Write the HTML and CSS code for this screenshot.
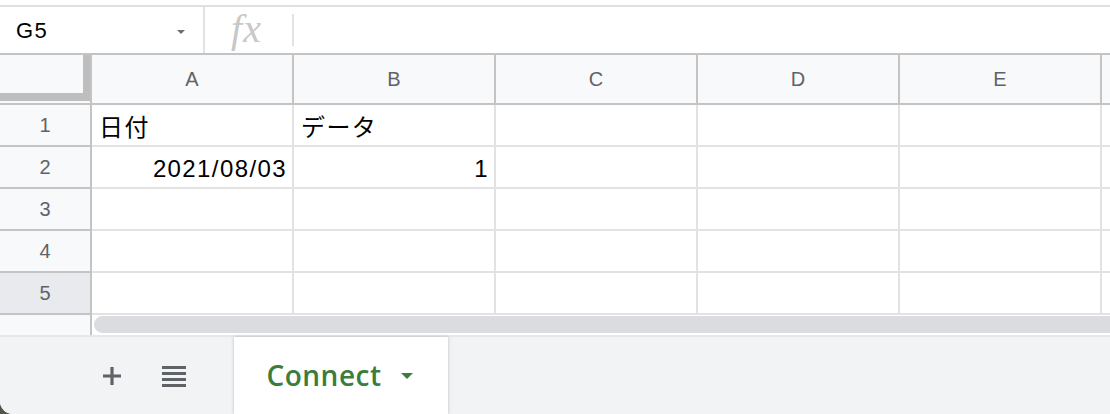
FILE: index.html
```html
<!DOCTYPE html>
<html lang="ja">
<head>
<meta charset="utf-8">
<title>Sheet</title>
<link rel="stylesheet" href="styles.css">
</head>
<body>
<div class="app">
  <div class="top-edge"></div>
  <div class="formula-bar">
    <div class="name-box">
      <span class="name-text">G5</span>
      <span class="name-caret"></span>
    </div>
    <div class="fx-wrap"><span class="fx">fx</span></div>
    <div class="formula-input"></div>
  </div>
  <div class="grid">
    <div class="corner"><div class="corner-bar"></div></div>
    <div class="col-head">A</div>
    <div class="col-head">B</div>
    <div class="col-head">C</div>
    <div class="col-head">D</div>
    <div class="col-head">E</div>
    <div class="col-head"></div>

    <div class="row-head">1</div>
    <div class="cell">日付</div>
    <div class="cell">データ</div>
    <div class="cell"></div>
    <div class="cell"></div>
    <div class="cell"></div>
    <div class="cell"></div>

    <div class="row-head">2</div>
    <div class="cell num">2021/08/03</div>
    <div class="cell num">1</div>
    <div class="cell"></div>
    <div class="cell"></div>
    <div class="cell"></div>
    <div class="cell"></div>

    <div class="row-head">3</div>
    <div class="cell"></div>
    <div class="cell"></div>
    <div class="cell"></div>
    <div class="cell"></div>
    <div class="cell"></div>
    <div class="cell"></div>

    <div class="row-head">4</div>
    <div class="cell"></div>
    <div class="cell"></div>
    <div class="cell"></div>
    <div class="cell"></div>
    <div class="cell"></div>
    <div class="cell"></div>

    <div class="row-head selected">5</div>
    <div class="cell"></div>
    <div class="cell"></div>
    <div class="cell"></div>
    <div class="cell"></div>
    <div class="cell"></div>
    <div class="cell"></div>
  </div>
  <div class="scroll-row">
    <div class="scroll-filler"></div>
    <div class="scroll-track"><div class="scroll-thumb"></div></div>
  </div>
  <div class="sheet-bar">
    <div class="sheet-tools">
      <button class="tool-btn" aria-label="シートを追加">
        <svg width="20" height="20" viewBox="0 0 20 20"><path d="M10 1v18M1 10h18" stroke="#5f6368" stroke-width="3.2" fill="none"/></svg>
      </button>
      <button class="tool-btn" aria-label="すべてのシート">
        <svg width="24" height="22" viewBox="0 0 24 22"><path d="M0 2.5h24M0 8.5h24M0 14.5h24M0 20.5h24" stroke="#5f6368" stroke-width="3" fill="none"/></svg>
      </button>
    </div>
    <div class="sheet-tab">
      <span class="tab-name">Connect</span>
      <span class="tab-caret"></span>
    </div>
  </div>
</div>
</body>
</html>
```

FILE: styles.css
```css
html {
  background: #55554c;
  margin: 0;
  height: 100%;
}
body {
  margin: 0;
  height: 100%;
  font-family: "Liberation Sans", Arial, "Noto Sans CJK JP", sans-serif;
}
.app {
  width: 1110px;
  height: 414px;
  background: #fff;
  overflow: hidden;
  border-bottom-left-radius: 13px;
  display: flex;
  flex-direction: column;
}
.top-edge {
  height: 5px;
  flex: none;
  border-bottom: 2px solid #e0e0e0;
}
.formula-bar {
  height: 46px;
  flex: none;
  display: flex;
  align-items: center;
  border-bottom: 2px solid #c4c4c4;
}
.name-box {
  width: 205px;
  height: 100%;
  box-sizing: border-box;
  display: flex;
  align-items: center;
  justify-content: space-between;
  padding: 1px 18px 0 16px;
  border-right: 2px solid #e3e3e3;
}
.name-text {
  font-size: 22px;
  letter-spacing: 1.4px;
  color: #000;
}
.name-caret {
  width: 0;
  height: 0;
  border-left: 4.5px solid transparent;
  border-right: 4.5px solid transparent;
  border-top: 4.5px solid #6e6e6e;
  margin-top: 2px;
}
.fx-wrap {
  width: 87px;
  height: 32px;
  display: flex;
  align-items: center;
  justify-content: center;
  border-right: 2px solid #e3e3e3;
}
.fx {
  font-family: "Liberation Serif", "Times New Roman", serif;
  font-style: italic;
  font-size: 40px;
  color: #c8c8c8;
  margin-left: -4px;
  margin-top: -4px;
  letter-spacing: 1px;
}
.formula-input {
  flex: 1;
}
.grid {
  flex: none;
  display: grid;
  grid-template-columns: 92px repeat(6, 202px);
  grid-template-rows: 50px repeat(5, 42px);
}
.grid > div {
  box-sizing: border-box;
}
.corner {
  background: #f8f9fa;
  border-right: 2px solid #c4c4c4;
  border-bottom: 2px solid #c4c4c4;
}
.corner-bar {
  width: 100%;
  height: 46px;
  box-sizing: border-box;
  border-right: 7px solid #bebebe;
  border-bottom: 8px solid #bebebe;
}
.col-head {
  background: #f8f9fa;
  border-right: 2px solid #c4c4c4;
  border-bottom: 2px solid #c4c4c4;
  display: flex;
  align-items: center;
  justify-content: center;
  font-size: 20px;
  color: #5f6368;
  padding-top: 1px;
}
.row-head {
  background: #f8f9fa;
  border-right: 2px solid #c4c4c4;
  border-bottom: 2px solid #c4c4c4;
  display: flex;
  align-items: center;
  justify-content: center;
  font-size: 20px;
  color: #5f6368;
}
.row-head.selected {
  background: #e8eaed;
}
.cell {
  border-right: 2px solid #e2e2e2;
  border-bottom: 2px solid #e2e2e2;
  display: flex;
  align-items: center;
  padding: 0 7px;
  font-size: 24px;
  letter-spacing: 1.4px;
  color: #000;
  white-space: nowrap;
}
.cell.num {
  justify-content: flex-end;
  padding-right: 5px;
  padding-top: 3px;
}
.scroll-row {
  flex: none;
  height: 20px;
  display: flex;
}
.scroll-filler {
  flex: none;
  width: 92px;
  box-sizing: border-box;
  background: #f8f9fa;
  border-right: 2px solid #c4c4c4;
}
.scroll-track {
  flex: 1;
  min-width: 0;
  overflow: hidden;
  padding: 1px 0 2px 2px;
}
.scroll-thumb {
  height: 17px;
  width: 1100px;
  border-radius: 9px;
  background: #dadce0;
}
.sheet-bar {
  flex: 1;
  background: #f1f3f4;
  border-top: 2px solid #e6e7e9;
  display: flex;
}
.sheet-tools {
  flex: none;
  width: 234px;
  display: flex;
  align-items: center;
  gap: 40px;
  padding-left: 102px;
  box-sizing: border-box;
}
.tool-btn {
  border: none;
  background: none;
  padding: 0;
  margin: 0;
  display: flex;
}
.sheet-tab {
  flex: none;
  width: 214px;
  box-sizing: border-box;
  background: #fff;
  box-shadow: 0 0 3px rgba(60, 64, 67, 0.3);
  display: flex;
  align-items: center;
  justify-content: center;
  gap: 19px;
  padding-bottom: 1px;
  padding-right: 3px;
}
.tab-name {
  font-family: "Open Sans", Roboto, sans-serif;
  font-weight: 600;
  font-size: 28px;
  color: #3a7d3c;
  letter-spacing: 0.5px;
}
.tab-caret {
  width: 0;
  height: 0;
  border-left: 6.5px solid transparent;
  border-right: 6.5px solid transparent;
  border-top: 6.5px solid #3a7d3c;
  margin-top: 2px;
}
```
